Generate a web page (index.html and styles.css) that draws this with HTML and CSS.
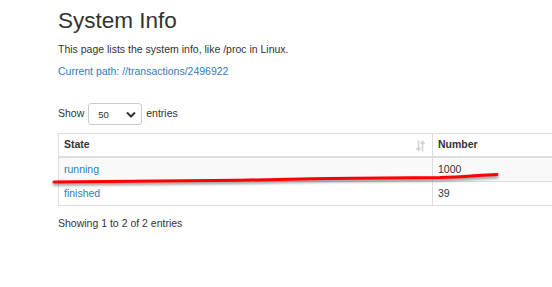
FILE: index.html
```html
<!DOCTYPE html>
<html lang="en">
<head>
    <meta charset="UTF-8">
    <meta name="viewport" content="width=device-width, initial-scale=1.0">
    <title>System Info</title>
    <link rel="stylesheet" href="styles.css">
</head>
<body>
    <div class="page">
        <h1 class="page-title">System Info</h1>
        <p class="page-desc">This page lists the system info, like /proc in Linux.</p>
        <p class="page-path"><a href="#">Current path: //transactions/2496922</a></p>

        <div class="length-row">
            <span>Show</span>
            <div class="length-select">
                <span>50</span>
                <svg class="chevron" width="10" height="7" viewBox="0 0 10 7">
                    <path d="M1 1.5 L5 5.5 L9 1.5" fill="none" stroke="#333" stroke-width="2"/>
                </svg>
            </div>
            <span>entries</span>
        </div>

        <table class="data-table">
            <thead>
                <tr>
                    <th class="col-state">
                        State
                        <svg class="sort-icon" width="9" height="12" viewBox="0 0 9 12">
                            <path d="M2.5 0.5 V10 M0.5 8 L2.5 10.5 L4.5 8" fill="none" stroke="#d4d4d4" stroke-width="1.6"/>
                            <path d="M6.5 11.5 V2 M4.5 4 L6.5 1.5 L8.5 4" fill="none" stroke="#d4d4d4" stroke-width="1.6"/>
                        </svg>
                    </th>
                    <th>Number</th>
                </tr>
            </thead>
            <tbody>
                <tr class="odd">
                    <td><a href="#">running</a></td>
                    <td>1000</td>
                </tr>
                <tr>
                    <td><a href="#">finished</a></td>
                    <td>39</td>
                </tr>
            </tbody>
        </table>

        <div class="table-info">Showing 1 to 2 of 2 entries</div>
    </div>

    <!-- hand drawn marker over the first row -->
    <svg class="marker" width="552" height="287" viewBox="0 0 552 287">
        <path d="M54 182 C 90 181.5, 160 180.8, 240 180.2 C 280 179.8, 300 178.6, 330 178.4 C 380 178.2, 420 178, 440 177.6 C 465 176.8, 480 175, 497 174.4"
              fill="none" stroke="#f00" stroke-width="3" stroke-linecap="round"/>
    </svg>
</body>
</html>
```

FILE: styles.css
```css
html,
body {
    margin: 0;
    padding: 0;
    overflow: hidden;
    background: #fff;
}

body {
    font-family: "Liberation Sans", Arial, sans-serif;
    font-size: 10.5px;
    line-height: 15px;
    color: #333;
}

a {
    color: #337ab7;
    text-decoration: none;
}

.page {
    padding-left: 58px;
    padding-top: 9px;
}

.page-title {
    margin: 0;
    font-size: 22.5px;
    line-height: 1.1;
    font-weight: normal;
}

.page-desc {
    margin: 8px 0 0;
}

.page-path {
    margin: 7px 0 0;
}

.length-row {
    display: flex;
    align-items: center;
    gap: 4px;
    margin-top: 24px;
    height: 22px;
}

.length-select {
    width: 54px;
    height: 22px;
    box-sizing: border-box;
    border: 1px solid #ccc;
    border-radius: 3px;
    display: flex;
    align-items: center;
    justify-content: space-between;
    padding: 1px 5px 0 9px;
    font-size: 9.5px;
}

.chevron {
    display: block;
}

.data-table {
    margin-top: 8px;
    border-collapse: collapse;
    width: 494px;
    table-layout: fixed;
}

.data-table th,
.data-table td {
    text-align: left;
    padding: 4px 5px;
    border: 1px solid #ddd;
}

.data-table th:last-child,
.data-table td:last-child {
    border-right: none;
}

.data-table th {
    font-weight: bold;
    padding: 3px 5px 4px;
    border-bottom: 2px solid #ddd;
}

.col-state {
    width: 363px;
    position: relative;
}

.sort-icon {
    position: absolute;
    right: 7px;
    top: 6px;
}

.data-table tr.odd td {
    background: #f9f9f9;
}

.table-info {
    margin-top: 10px;
}

.marker {
    position: absolute;
    left: 0;
    top: 0;
    pointer-events: none;
    filter: drop-shadow(0 2px 1.5px rgba(0, 0, 0, 0.45));
}
```
